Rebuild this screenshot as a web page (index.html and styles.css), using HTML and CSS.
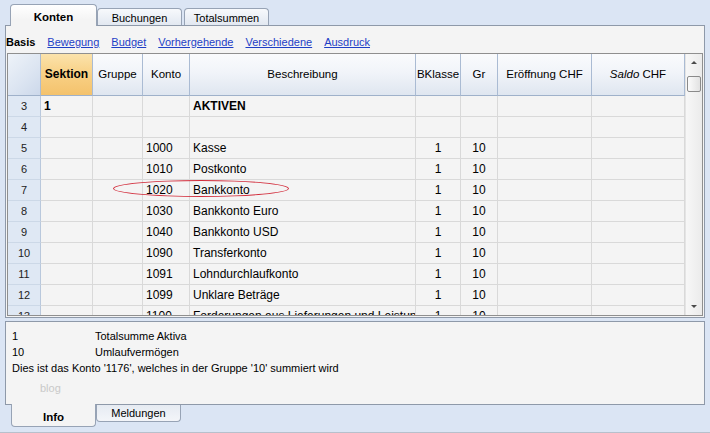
FILE: index.html
```html
<!DOCTYPE html>
<html lang="de">
<head>
<meta charset="utf-8">
<title>Konten</title>
<link rel="stylesheet" href="styles.css">
</head>
<body>
<div class="app">
  <div class="tabbar tabbar-top">
    <div class="tab tab-active">Konten</div>
    <div class="tab">Buchungen</div>
    <div class="tab tab-gap">Totalsummen</div>
  </div>

  <div class="panel panel-main">
    <div class="views">
      <span class="view view-current">Basis</span>
      <a class="view" href="#">Bewegung</a>
      <a class="view" href="#">Budget</a>
      <a class="view" href="#">Vorhergehende</a>
      <a class="view" href="#">Verschiedene</a>
      <a class="view" href="#">Ausdruck</a>
    </div>

    <div class="sheet">
      <div class="table">
        <div class="row row-head">
          <div class="cell corner"></div>
          <div class="cell hcell hcell-sel">Sektion</div>
          <div class="cell hcell">Gruppe</div>
          <div class="cell hcell">Konto</div>
          <div class="cell hcell">Beschreibung</div>
          <div class="cell hcell">BKlasse</div>
          <div class="cell hcell">Gr</div>
          <div class="cell hcell">Eröffnung CHF</div>
          <div class="cell hcell hcell-italic"><i>Saldo</i> CHF</div>
        </div>
        <div class="row">
          <div class="cell num">3</div>
          <div class="cell bold">1</div>
          <div class="cell"></div>
          <div class="cell"></div>
          <div class="cell bold">AKTIVEN</div>
          <div class="cell"></div><div class="cell"></div><div class="cell"></div><div class="cell"></div>
        </div>
        <div class="row">
          <div class="cell num">4</div>
          <div class="cell"></div><div class="cell"></div><div class="cell"></div><div class="cell"></div>
          <div class="cell"></div><div class="cell"></div><div class="cell"></div><div class="cell"></div>
        </div>
        <div class="row">
          <div class="cell num">5</div><div class="cell"></div><div class="cell"></div>
          <div class="cell">1000</div><div class="cell">Kasse</div>
          <div class="cell center">1</div><div class="cell center">10</div><div class="cell"></div><div class="cell"></div>
        </div>
        <div class="row">
          <div class="cell num">6</div><div class="cell"></div><div class="cell"></div>
          <div class="cell">1010</div><div class="cell">Postkonto</div>
          <div class="cell center">1</div><div class="cell center">10</div><div class="cell"></div><div class="cell"></div>
        </div>
        <div class="row">
          <div class="cell num">7</div><div class="cell"></div><div class="cell"></div>
          <div class="cell">1020</div><div class="cell">Bankkonto</div>
          <div class="cell center">1</div><div class="cell center">10</div><div class="cell"></div><div class="cell"></div>
        </div>
        <div class="row">
          <div class="cell num">8</div><div class="cell"></div><div class="cell"></div>
          <div class="cell">1030</div><div class="cell">Bankkonto Euro</div>
          <div class="cell center">1</div><div class="cell center">10</div><div class="cell"></div><div class="cell"></div>
        </div>
        <div class="row">
          <div class="cell num">9</div><div class="cell"></div><div class="cell"></div>
          <div class="cell">1040</div><div class="cell">Bankkonto USD</div>
          <div class="cell center">1</div><div class="cell center">10</div><div class="cell"></div><div class="cell"></div>
        </div>
        <div class="row">
          <div class="cell num">10</div><div class="cell"></div><div class="cell"></div>
          <div class="cell">1090</div><div class="cell">Transferkonto</div>
          <div class="cell center">1</div><div class="cell center">10</div><div class="cell"></div><div class="cell"></div>
        </div>
        <div class="row">
          <div class="cell num">11</div><div class="cell"></div><div class="cell"></div>
          <div class="cell">1091</div><div class="cell">Lohndurchlaufkonto</div>
          <div class="cell center">1</div><div class="cell center">10</div><div class="cell"></div><div class="cell"></div>
        </div>
        <div class="row">
          <div class="cell num">12</div><div class="cell"></div><div class="cell"></div>
          <div class="cell">1099</div><div class="cell">Unklare Beträge</div>
          <div class="cell center">1</div><div class="cell center">10</div><div class="cell"></div><div class="cell"></div>
        </div>
        <div class="row">
          <div class="cell num">13</div><div class="cell"></div><div class="cell"></div>
          <div class="cell">1100</div><div class="cell">Forderungen aus Lieferungen und Leistungen</div>
          <div class="cell center">1</div><div class="cell center">10</div><div class="cell"></div><div class="cell"></div>
        </div>
      </div>
      <div class="scrollbar">
        <div class="sb-btn"><span class="arrow arrow-up"></span></div>
        <div class="sb-thumb"></div>
        <div class="sb-track"></div>
        <div class="sb-btn"><span class="arrow arrow-down"></span></div>
      </div>
      <div class="mark"></div>
    </div>
  </div>

  <div class="panel panel-info">
    <div class="info-line"><span class="info-key">1</span><span>Totalsumme Aktiva</span></div>
    <div class="info-line"><span class="info-key">10</span><span>Umlaufvermögen</span></div>
    <div class="info-line">Dies ist das Konto '1176', welches in der Gruppe '10' summiert wird</div>
    <div class="info-faint">blog</div>
  </div>

  <div class="tabbar tabbar-bottom">
    <div class="tab tab-active">Info</div>
    <div class="tab">Meldungen</div>
  </div>
</div>
</body>
</html>
```

FILE: styles.css
```css
html, body {
  margin: 0;
  padding: 0;
}

body {
  width: 710px;
  height: 433px;
  overflow: hidden;
  background: #dbe5f4;
  font-family: "Liberation Sans", Arial, sans-serif;
  font-size: 11px;
  color: #000;
}

.app {
  height: 432px;
  border-bottom: 1px solid #b7c0cc;
  display: flex;
  flex-direction: column;
}

/* ---------- tabs ---------- */
.tabbar {
  display: flex;
  padding-left: 10px;
  position: relative;
  z-index: 2;
}

.tabbar-top {
  height: 25px;
  flex: 0 0 25px;
  align-items: flex-end;
}

.tab {
  box-sizing: border-box;
  width: 85px;
  height: 17px;
  border: 1px solid #97a3b5;
  border-bottom: none;
  border-radius: 4px 4px 0 0;
  background: linear-gradient(#f7f9fc, #e2e8f1);
  display: flex;
  align-items: center;
  justify-content: center;
  padding-top: 1px;
}

.tabbar-top .tab-active {
  width: 87px;
  height: 22px;
  margin-bottom: -1px;
  background: linear-gradient(#ffffff, #f4f4f4 70%);
  font-weight: bold;
  font-size: 11.5px;
  padding-top: 2px;
}

.tab-gap {
  margin-left: 2px;
}

.tabbar-bottom {
  flex: 1 1 auto;
  align-items: flex-start;
  padding-left: 11px;
}

.tabbar-bottom .tab {
  border: 1px solid #97a3b5;
  border-top: none;
  border-radius: 0 0 4px 4px;
  background: linear-gradient(#e6ebf2, #f3f5f9);
  padding-top: 0;
}

.tabbar-bottom .tab-active {
  width: 85px;
  height: 23px;
  margin-top: -1px;
  background: #f4f4f4;
  font-weight: bold;
  font-size: 11.5px;
  padding-top: 3px;
}

/* ---------- panels ---------- */
.panel {
  margin: 0 5px;
  border: 1px solid #8e99a9;
  background: #f4f4f4;
}

.panel-main {
  height: 291px;
  display: flex;
  flex-direction: column;
}

.views {
  height: 27px;
  flex: 0 0 27px;
  box-sizing: border-box;
  padding-top: 5px;
  display: flex;
  align-items: center;
  gap: 12px;
}

.view {
  color: #1f3fc6;
  text-decoration: underline;
}

.view-current {
  color: #000;
  text-decoration: none;
  font-weight: bold;
}

/* ---------- sheet ---------- */
.sheet {
  position: relative;
  margin: 0 1px;
  height: 261px;
  border: 1px solid #8f8f8f;
  display: flex;
  overflow: hidden;
}

.table {
  width: 677px;
  flex: 0 0 677px;
  overflow: hidden;
}

.row {
  display: grid;
  grid-template-columns: 33px 52px 50px 47px 226px 45px 37px 94px 93px;
  height: 21px;
  font-size: 12px;
}

.cell {
  box-sizing: border-box;
  border-right: 1px solid #d9d9d9;
  border-bottom: 1px solid #d9d9d9;
  line-height: 20px;
  padding: 0 3px;
  white-space: nowrap;
  overflow: hidden;
}

.bold {
  font-weight: bold;
}

.center {
  text-align: center;
  padding: 0;
}

.num {
  background: #dfe8f4;
  border-right: 1px solid #b9c8dc;
  border-bottom: 1px solid #ccd8e7;
  text-align: center;
  font-size: 11px;
  color: #222;
  padding: 0;
}

.row-head {
  height: 42px;
}

.row-head .cell {
  line-height: 41px;
  border-right: 1px solid #aabbd3;
  border-bottom: 1px solid #9fb1ca;
}

.corner {
  background: linear-gradient(135deg, #eef3f9 0%, #dbe4f1 60%, #ccd8ea 100%);
}

.hcell {
  background: linear-gradient(#fafbfd, #f1f4f9 45%, #dfe6f0);
  text-align: center;
  font-size: 11.5px;
  padding: 0;
}

.hcell-sel {
  background: linear-gradient(#fbe3ac, #f8d084 50%, #f4c26c);
  font-weight: bold;
  font-size: 12px;
}

/* ---------- scrollbar ---------- */
.scrollbar {
  flex: 1 1 auto;
  display: flex;
  flex-direction: column;
  background: linear-gradient(90deg, #f7f7f7, #ebebeb);
  border-left: 1px solid #e4e4e4;
}

.sb-btn {
  height: 17px;
  flex: 0 0 17px;
  display: flex;
  align-items: center;
  justify-content: center;
}

.arrow {
  width: 0;
  height: 0;
  border-left: 3px solid transparent;
  border-right: 3px solid transparent;
}

.arrow-up {
  border-bottom: 3px solid #4a4a4a;
}

.arrow-down {
  border-top: 3px solid #4a4a4a;
}

.sb-thumb {
  box-sizing: border-box;
  margin: 5px 1px 0 1px;
  height: 16px;
  flex: 0 0 16px;
  border: 1px solid #8a8a8a;
  border-radius: 2px;
  background: linear-gradient(90deg, #fbfbfb, #e2e2e2);
}

.sb-track {
  flex: 1 1 auto;
}

/* ---------- marker ---------- */
.mark {
  position: absolute;
  left: 105px;
  top: 126px;
  width: 176px;
  height: 17px;
  box-sizing: border-box;
  border: 1.5px solid #d22c3b;
  border-radius: 50%;
  pointer-events: none;
}

/* ---------- info ---------- */
.panel-info {
  margin-top: 3px;
  height: 82px;
  box-sizing: content-box;
  padding: 6px 0 0 6px;
  height: 76px;
}

.info-line {
  height: 16px;
  line-height: 16px;
  display: flex;
  white-space: nowrap;
}

.info-key {
  width: 83px;
}

.info-faint {
  margin: 4px 0 0 28px;
  line-height: 16px;
  color: #c9c9c9;
}
```
